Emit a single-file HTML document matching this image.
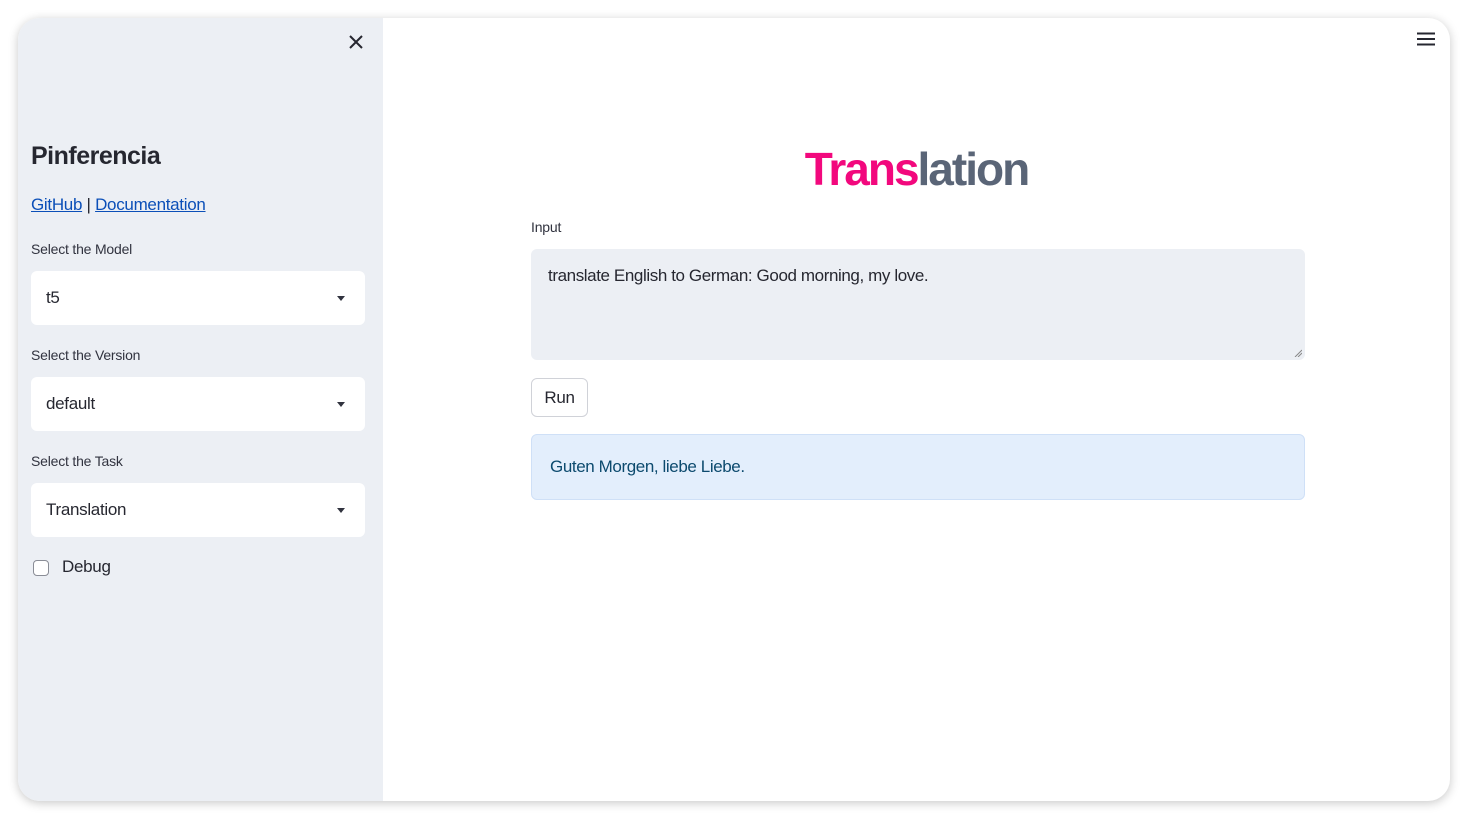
<!DOCTYPE html>
<html><head><meta charset="utf-8"><style>
*{box-sizing:border-box;margin:0;padding:0}
body{width:1468px;height:820px;background:#fff;font-family:"Liberation Sans",sans-serif;position:relative;overflow:hidden;color:#262730}
.win{position:absolute;left:18px;top:18px;width:1432px;height:783px;border-radius:22px;background:#fff;box-shadow:0 2px 10px rgba(0,0,0,.22);overflow:hidden}
.side{position:absolute;left:0;top:0;width:365px;height:100%;background:#eceff4}
.abs{position:absolute}
.lbl{font-size:14px;color:#31333f;letter-spacing:-.2px}
.sel{position:absolute;left:13px;width:334px;height:54px;background:#fff;border-radius:6px;font-size:17px;padding-left:15px;line-height:54px;color:#262730;letter-spacing:-.3px}
.sel:after{content:"";position:absolute;right:20px;top:25px;border-left:4px solid transparent;border-right:4px solid transparent;border-top:5px solid #31333f}
a{color:#0b4fb8;text-decoration:underline}
</style></head><body>
<div class="win">
 <div class="side">
  <svg class="abs" style="left:330px;top:16px" width="16" height="16" viewBox="0 0 16 16"><path d="M2 2L14 14M14 2L2 14" stroke="#262730" stroke-width="2"/></svg>
  <div class="abs" style="left:13px;top:124px;font-size:25px;font-weight:bold;letter-spacing:-.5px">Pinferencia</div>
  <div class="abs" style="left:13px;top:177px;font-size:17px;letter-spacing:-.3px"><a>GitHub</a> | <a>Documentation</a></div>
  <div class="abs lbl" style="left:13px;top:223px">Select the Model</div>
  <div class="sel" style="top:253px">t5</div>
  <div class="abs lbl" style="left:13px;top:329px">Select the Version</div>
  <div class="sel" style="top:359px">default</div>
  <div class="abs lbl" style="left:13px;top:435px">Select the Task</div>
  <div class="sel" style="top:465px">Translation</div>
  <div class="abs" style="left:15px;top:542px;width:16px;height:16px;border:1.5px solid #8a8d96;border-radius:4px;background:#fff"></div>
  <div class="abs" style="left:44px;top:539px;font-size:17px;letter-spacing:-.3px">Debug</div>
 </div>
 <svg class="abs" style="left:1399px;top:14px" width="18" height="14" viewBox="0 0 18 14"><path d="M0 1.5H18M0 7H18M0 12.5H18" stroke="#262730" stroke-width="2"/></svg>
 <div class="abs" style="left:365px;width:1067px;top:124px;text-align:center;font-size:46px;font-weight:bold;letter-spacing:-2px;color:#5a6577"><span style="color:#f2087d">Trans</span>lation</div>
 <div class="abs lbl" style="left:513px;top:201px">Input</div>
 <div class="abs" style="left:513px;top:231px;width:774px;height:111px;background:#eceff4;border-radius:6px;padding:17px 17px;font-size:17px;letter-spacing:-.4px;color:#262730">translate English to German: Good morning, my love.
  <svg class="abs" style="right:3px;bottom:3px" width="8" height="8"><path d="M1 8L8 1M4 8L8 4" stroke="#888" stroke-width="1"/></svg></div>
 <div class="abs" style="left:513px;top:360px;width:57px;height:39px;border:1px solid #d0d2d8;border-radius:6px;background:#fff;text-align:center;line-height:37px;font-size:17px;letter-spacing:-.3px">Run</div>
 <div class="abs" style="left:513px;top:416px;width:774px;height:66px;background:#e3eefc;border:1px solid #cfe0f7;border-radius:6px;padding-left:18px;line-height:64px;font-size:17px;color:#0c4a6e;letter-spacing:-.4px">Guten Morgen, liebe Liebe.</div>
</div>
</body></html>
